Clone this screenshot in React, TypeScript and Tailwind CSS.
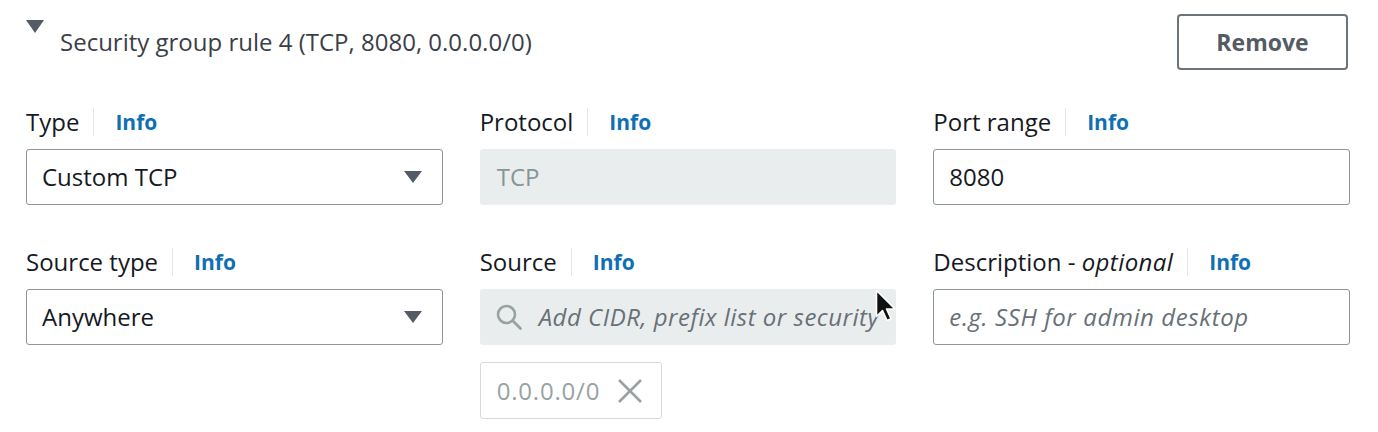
import React from "react"

const FONT = "font-['Open_Sans','Noto_Sans',sans-serif]"

function Label({ text, optional }: { text: string; optional?: boolean }) {
  return (
    <div className="flex items-center h-[32px]">
      <span className="text-[24px] leading-[32px] text-[#16191f] pr-[14px]">
        {text}
        {optional && <> - <i className="tracking-[0.4px]">optional</i></>}
      </span>
      <span className="w-px h-[28px] bg-[#e4e7e8]" />
      <span className="ml-[21px] text-[21px] font-bold text-[#0f6fb5] leading-[32px]">Info</span>
    </div>
  )
}

function Caret() {
  return (
    <svg width="18" height="12" viewBox="0 0 18 12" className="shrink-0">
      <path d="M0 0h18L9 12z" fill="#545b64" />
    </svg>
  )
}

function Select({ value }: { value: string }) {
  return (
    <div className="h-[56px] border-[1.5px] border-[#8d9699] rounded-[3px] flex items-center justify-between pl-[15px] pr-[20px] bg-white">
      <span className="text-[24px] text-[#16191f]">{value}</span>
      <Caret />
    </div>
  )
}

export default function App() {
  return (
    <div className={`${FONT} w-[1378px] h-[432px] bg-white relative overflow-hidden pl-[26px] pr-[28px] pt-[14px]`}>
      {/* header */}
      <div className="flex justify-between items-start">
        <div className="flex items-start">
          <svg width="18" height="13" viewBox="0 0 18 13" className="mt-[6px]">
            <path d="M0 0h18L9 13z" fill="#545b64" />
          </svg>
          <span className="ml-[16px] mt-[12px] text-[24px] leading-[32px] text-[#3b4048]">
            Security group rule 4 (TCP, 8080, 0.0.0.0/0)
          </span>
        </div>
        <button className="w-[171px] h-[56px] border-2 border-[#6b737c] rounded-[4px] text-[23px] font-bold text-[#545b64] mr-[2px]">
          Remove
        </button>
      </div>

      <div className="grid grid-cols-3 gap-x-[37px] mt-[36px]">
        {/* row 1 */}
        <div>
          <Label text="Type" />
          <div className="mt-[11px]"><Select value="Custom TCP" /></div>
        </div>
        <div>
          <Label text="Protocol" />
          <div className="mt-[11px] h-[56px] rounded-[3px] bg-[#eaeded] flex items-center pl-[17px]">
            <span className="text-[24px] text-[#879596]">TCP</span>
          </div>
        </div>
        <div>
          <Label text="Port range" />
          <div className="mt-[11px] h-[56px] border-[1.5px] border-[#8d9699] rounded-[3px] flex items-center pl-[15px]">
            <span className="text-[24px] text-[#16191f]">8080</span>
          </div>
        </div>

        {/* row 2 */}
        <div className="mt-[41px]">
          <Label text="Source type" />
          <div className="mt-[11px]"><Select value="Anywhere" /></div>
        </div>
        <div className="mt-[41px]">
          <Label text="Source" />
          <div className="mt-[11px] h-[56px] rounded-[3px] bg-[#eaeded] flex items-center pl-[15px] overflow-hidden">
            <svg width="28" height="28" viewBox="0 0 28 28" className="shrink-0">
              <circle cx="11.5" cy="11.5" r="8.5" fill="none" stroke="#98a2a3" strokeWidth="2.6" />
              <path d="M18 18l7.5 7.5" stroke="#98a2a3" strokeWidth="2.8" strokeLinecap="round" />
            </svg>
            <span className="ml-[16px] text-[24px] italic text-[#687078] whitespace-nowrap tracking-[0.5px]">
              Add CIDR, prefix list or security
            </span>
          </div>
          <div className="mt-[17px] w-[182px] h-[57px] border-[1.5px] border-[#d5dbdb] rounded-[3px] flex items-center pl-[16px]">
            <span className="text-[24px] text-[#98a2a3] tracking-[0.8px]">0.0.0.0/0</span>
            <svg width="26" height="26" viewBox="0 0 26 26" className="ml-[17px]">
              <path d="M2 2l22 22M24 2L2 24" stroke="#98a2a3" strokeWidth="2.6" />
            </svg>
          </div>
        </div>
        <div className="mt-[41px]">
          <Label text="Description" optional />
          <div className="mt-[11px] h-[56px] border-[1.5px] border-[#8d9699] rounded-[3px] flex items-center pl-[15px]">
            <span className="text-[24px] italic text-[#687078] tracking-[0.6px]">e.g. SSH for admin desktop</span>
          </div>
        </div>
      </div>

      {/* mouse pointer */}
      <svg width="22" height="34" viewBox="0 0 22 34" className="absolute left-[875px] top-[289px]">
        <path d="M1.5 1.5v26l6-6 4.5 10 4-1.8-4.5-9.7h8.5z" fill="#111" stroke="#fff" strokeWidth="1.6" strokeLinejoin="round" />
      </svg>
    </div>
  )
}
